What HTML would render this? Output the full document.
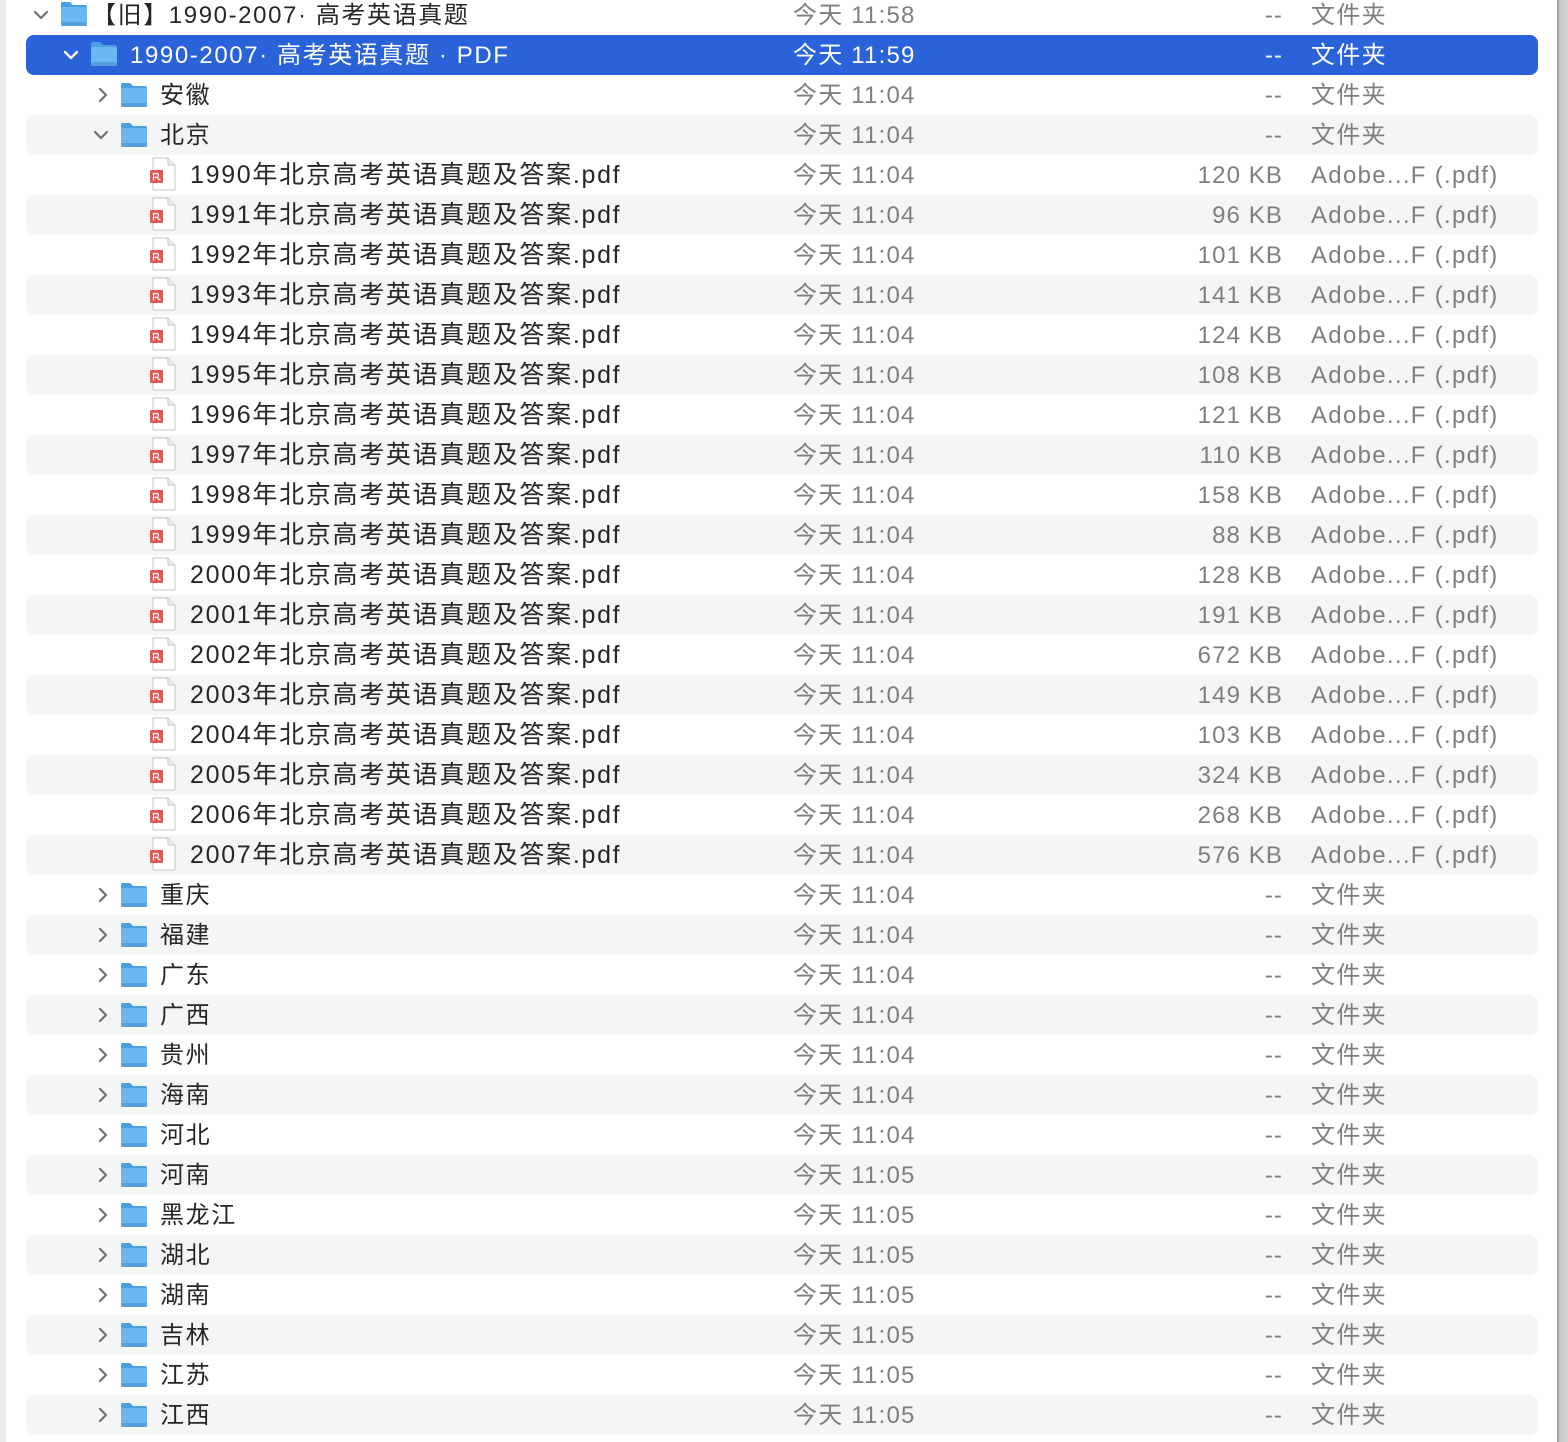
<!DOCTYPE html>
<html><head><meta charset="utf-8">
<style>
html,body{margin:0;padding:0;width:1568px;height:1442px;overflow:hidden}
body{background:#fff;position:relative;font-family:"Liberation Sans","Noto Sans CJK SC",sans-serif;font-size:24px;color:#262626}
.lb{position:absolute;left:0;top:0;width:6px;height:1442px;background:#ececec}
.rb{position:absolute;left:1557px;top:0;width:11px;height:1442px;background:linear-gradient(90deg,#9a9a9a,#c9c9c9 3px,#d4d4d4)}
.r{position:absolute;left:0;width:1557px;height:40px}
.r.s::before{content:"";position:absolute;left:26px;width:1512px;top:0;height:40px;background:#f4f5f5;border-radius:8px}
.r.sel::before{content:"";position:absolute;left:26px;width:1512px;top:0;height:40px;background:#2a62d9;border-radius:8px}
.r span,.r svg{position:absolute}
.n{top:6px;line-height:30px;white-space:nowrap;letter-spacing:1.6px}
.p .n{font-size:25px;letter-spacing:1.7px;top:5px}
.d{left:793px;top:6px;line-height:30px;color:#7f7f7f;letter-spacing:1.2px}
.z{right:274px;top:6px;line-height:30px;color:#7f7f7f;text-align:right;letter-spacing:1.1px}
.k{left:1311px;top:6px;line-height:30px;color:#7f7f7f;letter-spacing:1.3px;white-space:nowrap}
.sel .n,.sel .d,.sel .z,.sel .k{color:#fff}
</style></head><body>
<div class="lb"></div>
<svg width="0" height="0" style="position:absolute">
<defs>
<symbol id="fo" viewBox="0 0 28 26"><path d="M1 3a2 2 0 0 1 2-2h7l3 3h12a2 2 0 0 1 2 2v3H1z" fill="#4a9fe0"/><rect x="1" y="6" width="26" height="19" rx="2" fill="#6bb8f0"/><rect x="1" y="21" width="26" height="4" rx="1.5" fill="#559fdc"/></symbol>
<symbol id="pd" viewBox="0 0 28 34"><path d="M4 1h15l7 7v24a1 1 0 0 1-1 1H5a1 1 0 0 1-1-1z" fill="#fff" stroke="#c4c4c4"/><path d="M19 1v6a1 1 0 0 0 1 1h6" fill="#eee" stroke="#c4c4c4"/><rect x="1" y="13" width="13" height="13" rx="1.5" fill="#dc5a52"/><path d="M4.5 23.5v-7h3a1.9 1.9 0 0 1 0 3.8H4.5M8 20.5l3.5 3" stroke="#fff" stroke-width="1.2" fill="none"/></symbol>
<symbol id="cd" viewBox="0 0 16 10"><path d="M2 2l6 6 6-6" stroke="#707070" stroke-width="2.2" fill="none" stroke-linecap="round" stroke-linejoin="round"/></symbol>
<symbol id="cdw" viewBox="0 0 16 10"><path d="M2 2l6 6 6-6" stroke="#fff" stroke-width="2.4" fill="none" stroke-linecap="round" stroke-linejoin="round"/></symbol>
<symbol id="cr" viewBox="0 0 10 16"><path d="M2 2l6 6-6 6" stroke="#707070" stroke-width="2.2" fill="none" stroke-linecap="round" stroke-linejoin="round"/></symbol>
</defs></svg>

<div class="r" style="top:-5px"><svg style="left:33px;top:15px" width="16" height="10"><use href="#cd"/></svg><svg style="left:60px;top:6px" width="28" height="26"><use href="#fo"/></svg><span class="n" style="left:92px">【旧】1990-2007· 高考英语真题</span><span class="d">今天 11:58</span><span class="z">--</span><span class="k">文件夹</span></div>
<div class="r sel" style="top:35px"><svg style="left:63px;top:15px" width="16" height="10"><use href="#cdw"/></svg><svg style="left:90px;top:6px" width="28" height="26"><use href="#fo"/></svg><span class="n" style="left:130px">1990-2007· 高考英语真题 · PDF</span><span class="d">今天 11:59</span><span class="z">--</span><span class="k">文件夹</span></div>
<div class="r" style="top:75px"><svg style="left:98px;top:12px" width="10" height="16"><use href="#cr"/></svg><svg style="left:120px;top:7px" width="28" height="26"><use href="#fo"/></svg><span class="n" style="left:160px">安徽</span><span class="d">今天 11:04</span><span class="z">--</span><span class="k">文件夹</span></div>
<div class="r s" style="top:115px"><svg style="left:93px;top:15px" width="16" height="10"><use href="#cd"/></svg><svg style="left:120px;top:7px" width="28" height="26"><use href="#fo"/></svg><span class="n" style="left:160px">北京</span><span class="d">今天 11:04</span><span class="z">--</span><span class="k">文件夹</span></div>

<div class="r p" style="top:155px"><svg style="left:149px;top:2px" width="28" height="34"><use href="#pd"/></svg><span class="n" style="left:190px">1990年北京高考英语真题及答案.pdf</span><span class="d">今天 11:04</span><span class="z">120 KB</span><span class="k">Adobe...F (.pdf)</span></div>
<div class="r p s" style="top:195px"><svg style="left:149px;top:2px" width="28" height="34"><use href="#pd"/></svg><span class="n" style="left:190px">1991年北京高考英语真题及答案.pdf</span><span class="d">今天 11:04</span><span class="z">96 KB</span><span class="k">Adobe...F (.pdf)</span></div>
<div class="r p" style="top:235px"><svg style="left:149px;top:2px" width="28" height="34"><use href="#pd"/></svg><span class="n" style="left:190px">1992年北京高考英语真题及答案.pdf</span><span class="d">今天 11:04</span><span class="z">101 KB</span><span class="k">Adobe...F (.pdf)</span></div>
<div class="r p s" style="top:275px"><svg style="left:149px;top:2px" width="28" height="34"><use href="#pd"/></svg><span class="n" style="left:190px">1993年北京高考英语真题及答案.pdf</span><span class="d">今天 11:04</span><span class="z">141 KB</span><span class="k">Adobe...F (.pdf)</span></div>
<div class="r p" style="top:315px"><svg style="left:149px;top:2px" width="28" height="34"><use href="#pd"/></svg><span class="n" style="left:190px">1994年北京高考英语真题及答案.pdf</span><span class="d">今天 11:04</span><span class="z">124 KB</span><span class="k">Adobe...F (.pdf)</span></div>
<div class="r p s" style="top:355px"><svg style="left:149px;top:2px" width="28" height="34"><use href="#pd"/></svg><span class="n" style="left:190px">1995年北京高考英语真题及答案.pdf</span><span class="d">今天 11:04</span><span class="z">108 KB</span><span class="k">Adobe...F (.pdf)</span></div>
<div class="r p" style="top:395px"><svg style="left:149px;top:2px" width="28" height="34"><use href="#pd"/></svg><span class="n" style="left:190px">1996年北京高考英语真题及答案.pdf</span><span class="d">今天 11:04</span><span class="z">121 KB</span><span class="k">Adobe...F (.pdf)</span></div>
<div class="r p s" style="top:435px"><svg style="left:149px;top:2px" width="28" height="34"><use href="#pd"/></svg><span class="n" style="left:190px">1997年北京高考英语真题及答案.pdf</span><span class="d">今天 11:04</span><span class="z">110 KB</span><span class="k">Adobe...F (.pdf)</span></div>
<div class="r p" style="top:475px"><svg style="left:149px;top:2px" width="28" height="34"><use href="#pd"/></svg><span class="n" style="left:190px">1998年北京高考英语真题及答案.pdf</span><span class="d">今天 11:04</span><span class="z">158 KB</span><span class="k">Adobe...F (.pdf)</span></div>
<div class="r p s" style="top:515px"><svg style="left:149px;top:2px" width="28" height="34"><use href="#pd"/></svg><span class="n" style="left:190px">1999年北京高考英语真题及答案.pdf</span><span class="d">今天 11:04</span><span class="z">88 KB</span><span class="k">Adobe...F (.pdf)</span></div>
<div class="r p" style="top:555px"><svg style="left:149px;top:2px" width="28" height="34"><use href="#pd"/></svg><span class="n" style="left:190px">2000年北京高考英语真题及答案.pdf</span><span class="d">今天 11:04</span><span class="z">128 KB</span><span class="k">Adobe...F (.pdf)</span></div>
<div class="r p s" style="top:595px"><svg style="left:149px;top:2px" width="28" height="34"><use href="#pd"/></svg><span class="n" style="left:190px">2001年北京高考英语真题及答案.pdf</span><span class="d">今天 11:04</span><span class="z">191 KB</span><span class="k">Adobe...F (.pdf)</span></div>
<div class="r p" style="top:635px"><svg style="left:149px;top:2px" width="28" height="34"><use href="#pd"/></svg><span class="n" style="left:190px">2002年北京高考英语真题及答案.pdf</span><span class="d">今天 11:04</span><span class="z">672 KB</span><span class="k">Adobe...F (.pdf)</span></div>
<div class="r p s" style="top:675px"><svg style="left:149px;top:2px" width="28" height="34"><use href="#pd"/></svg><span class="n" style="left:190px">2003年北京高考英语真题及答案.pdf</span><span class="d">今天 11:04</span><span class="z">149 KB</span><span class="k">Adobe...F (.pdf)</span></div>
<div class="r p" style="top:715px"><svg style="left:149px;top:2px" width="28" height="34"><use href="#pd"/></svg><span class="n" style="left:190px">2004年北京高考英语真题及答案.pdf</span><span class="d">今天 11:04</span><span class="z">103 KB</span><span class="k">Adobe...F (.pdf)</span></div>
<div class="r p s" style="top:755px"><svg style="left:149px;top:2px" width="28" height="34"><use href="#pd"/></svg><span class="n" style="left:190px">2005年北京高考英语真题及答案.pdf</span><span class="d">今天 11:04</span><span class="z">324 KB</span><span class="k">Adobe...F (.pdf)</span></div>
<div class="r p" style="top:795px"><svg style="left:149px;top:2px" width="28" height="34"><use href="#pd"/></svg><span class="n" style="left:190px">2006年北京高考英语真题及答案.pdf</span><span class="d">今天 11:04</span><span class="z">268 KB</span><span class="k">Adobe...F (.pdf)</span></div>
<div class="r p s" style="top:835px"><svg style="left:149px;top:2px" width="28" height="34"><use href="#pd"/></svg><span class="n" style="left:190px">2007年北京高考英语真题及答案.pdf</span><span class="d">今天 11:04</span><span class="z">576 KB</span><span class="k">Adobe...F (.pdf)</span></div>

<div class="r" style="top:875px"><svg style="left:98px;top:12px" width="10" height="16"><use href="#cr"/></svg><svg style="left:120px;top:7px" width="28" height="26"><use href="#fo"/></svg><span class="n" style="left:160px">重庆</span><span class="d">今天 11:04</span><span class="z">--</span><span class="k">文件夹</span></div>
<div class="r s" style="top:915px"><svg style="left:98px;top:12px" width="10" height="16"><use href="#cr"/></svg><svg style="left:120px;top:7px" width="28" height="26"><use href="#fo"/></svg><span class="n" style="left:160px">福建</span><span class="d">今天 11:04</span><span class="z">--</span><span class="k">文件夹</span></div>
<div class="r" style="top:955px"><svg style="left:98px;top:12px" width="10" height="16"><use href="#cr"/></svg><svg style="left:120px;top:7px" width="28" height="26"><use href="#fo"/></svg><span class="n" style="left:160px">广东</span><span class="d">今天 11:04</span><span class="z">--</span><span class="k">文件夹</span></div>
<div class="r s" style="top:995px"><svg style="left:98px;top:12px" width="10" height="16"><use href="#cr"/></svg><svg style="left:120px;top:7px" width="28" height="26"><use href="#fo"/></svg><span class="n" style="left:160px">广西</span><span class="d">今天 11:04</span><span class="z">--</span><span class="k">文件夹</span></div>
<div class="r" style="top:1035px"><svg style="left:98px;top:12px" width="10" height="16"><use href="#cr"/></svg><svg style="left:120px;top:7px" width="28" height="26"><use href="#fo"/></svg><span class="n" style="left:160px">贵州</span><span class="d">今天 11:04</span><span class="z">--</span><span class="k">文件夹</span></div>
<div class="r s" style="top:1075px"><svg style="left:98px;top:12px" width="10" height="16"><use href="#cr"/></svg><svg style="left:120px;top:7px" width="28" height="26"><use href="#fo"/></svg><span class="n" style="left:160px">海南</span><span class="d">今天 11:04</span><span class="z">--</span><span class="k">文件夹</span></div>
<div class="r" style="top:1115px"><svg style="left:98px;top:12px" width="10" height="16"><use href="#cr"/></svg><svg style="left:120px;top:7px" width="28" height="26"><use href="#fo"/></svg><span class="n" style="left:160px">河北</span><span class="d">今天 11:04</span><span class="z">--</span><span class="k">文件夹</span></div>
<div class="r s" style="top:1155px"><svg style="left:98px;top:12px" width="10" height="16"><use href="#cr"/></svg><svg style="left:120px;top:7px" width="28" height="26"><use href="#fo"/></svg><span class="n" style="left:160px">河南</span><span class="d">今天 11:05</span><span class="z">--</span><span class="k">文件夹</span></div>
<div class="r" style="top:1195px"><svg style="left:98px;top:12px" width="10" height="16"><use href="#cr"/></svg><svg style="left:120px;top:7px" width="28" height="26"><use href="#fo"/></svg><span class="n" style="left:160px">黑龙江</span><span class="d">今天 11:05</span><span class="z">--</span><span class="k">文件夹</span></div>
<div class="r s" style="top:1235px"><svg style="left:98px;top:12px" width="10" height="16"><use href="#cr"/></svg><svg style="left:120px;top:7px" width="28" height="26"><use href="#fo"/></svg><span class="n" style="left:160px">湖北</span><span class="d">今天 11:05</span><span class="z">--</span><span class="k">文件夹</span></div>
<div class="r" style="top:1275px"><svg style="left:98px;top:12px" width="10" height="16"><use href="#cr"/></svg><svg style="left:120px;top:7px" width="28" height="26"><use href="#fo"/></svg><span class="n" style="left:160px">湖南</span><span class="d">今天 11:05</span><span class="z">--</span><span class="k">文件夹</span></div>
<div class="r s" style="top:1315px"><svg style="left:98px;top:12px" width="10" height="16"><use href="#cr"/></svg><svg style="left:120px;top:7px" width="28" height="26"><use href="#fo"/></svg><span class="n" style="left:160px">吉林</span><span class="d">今天 11:05</span><span class="z">--</span><span class="k">文件夹</span></div>
<div class="r" style="top:1355px"><svg style="left:98px;top:12px" width="10" height="16"><use href="#cr"/></svg><svg style="left:120px;top:7px" width="28" height="26"><use href="#fo"/></svg><span class="n" style="left:160px">江苏</span><span class="d">今天 11:05</span><span class="z">--</span><span class="k">文件夹</span></div>
<div class="r s" style="top:1395px"><svg style="left:98px;top:12px" width="10" height="16"><use href="#cr"/></svg><svg style="left:120px;top:7px" width="28" height="26"><use href="#fo"/></svg><span class="n" style="left:160px">江西</span><span class="d">今天 11:05</span><span class="z">--</span><span class="k">文件夹</span></div>
<div class="r" style="top:1435px"><svg style="left:120px;top:7px" width="28" height="26"><use href="#fo"/></svg></div>
<div class="rb"></div>
</body></html>
